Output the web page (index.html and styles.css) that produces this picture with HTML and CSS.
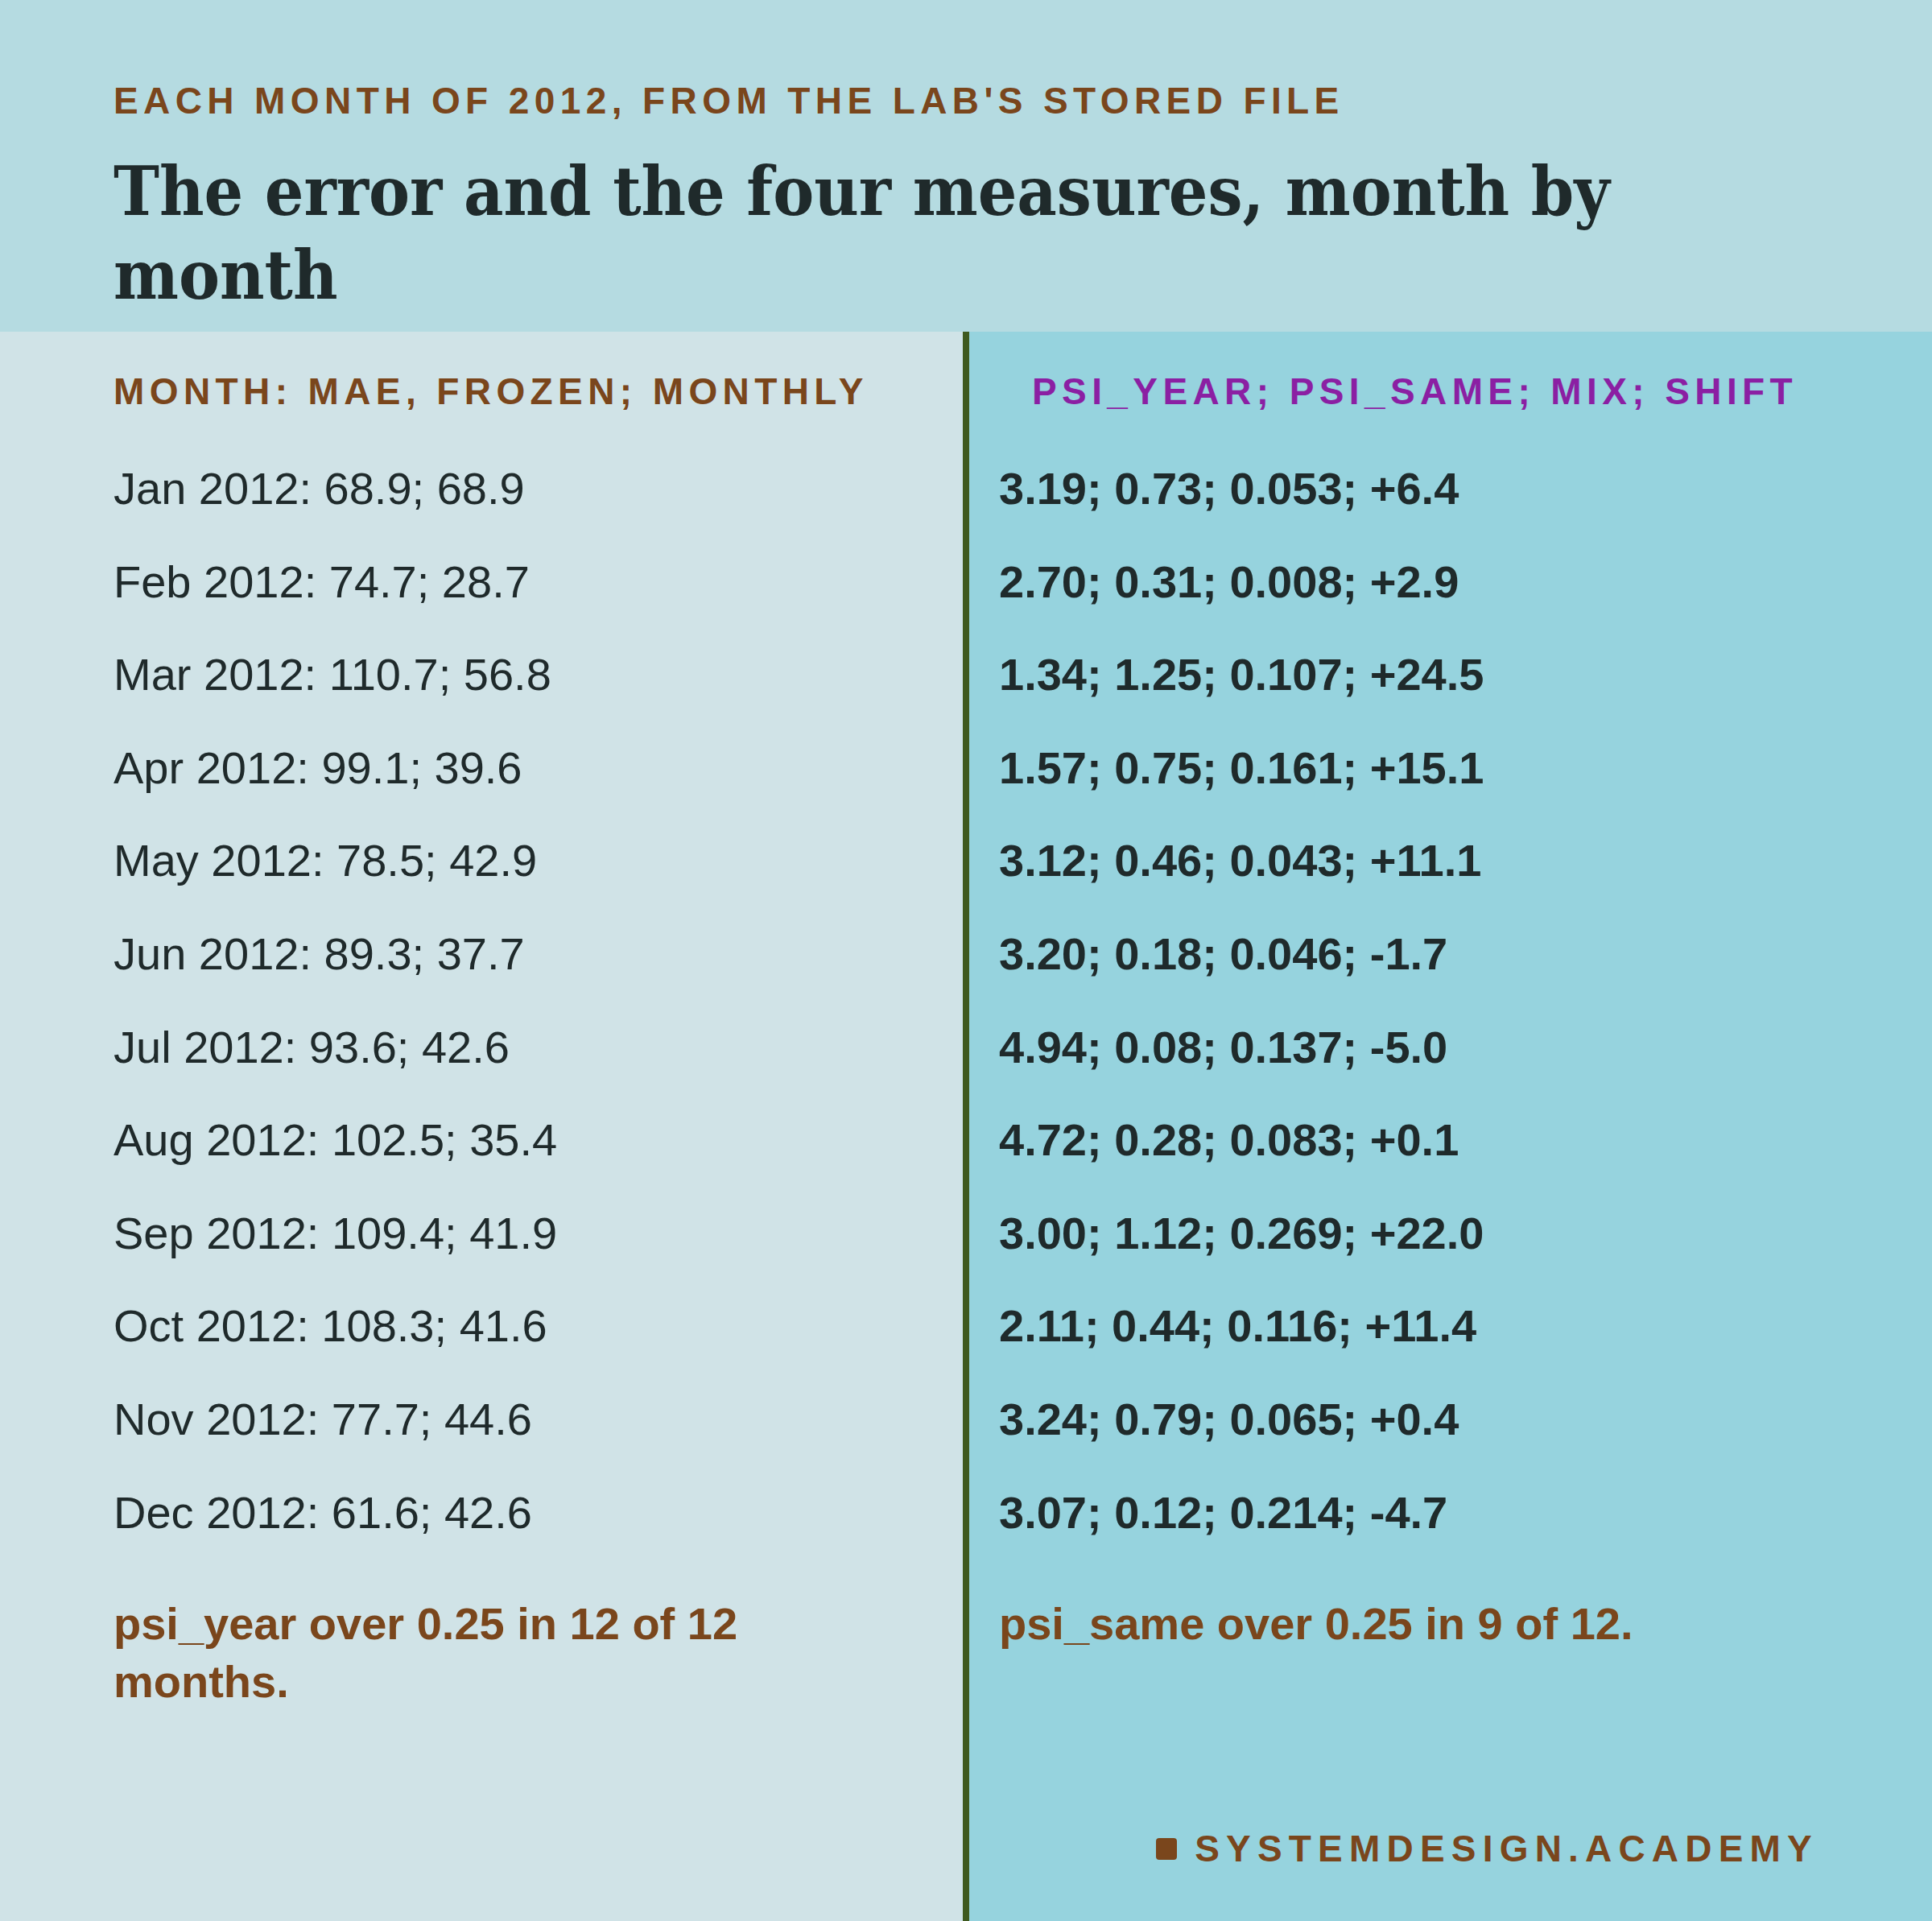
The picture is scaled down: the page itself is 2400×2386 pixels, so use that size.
FILE: index.html
```html
<!DOCTYPE html>
<html lang="en">
<head>
<meta charset="utf-8">
<title>The error and the four measures, month by month</title>
<link rel="stylesheet" href="styles.css">
</head>
<body>
<div class="page">
  <header class="masthead">
    <div class="eyebrow">EACH MONTH OF 2012, FROM THE LAB'S STORED FILE</div>
    <h1 class="title">The error and the four measures, month by month</h1>
  </header>
  <main class="columns">
    <section class="col col-left">
      <div class="col-head col-head-left">MONTH: MAE, FROZEN; MONTHLY</div>
      <ul class="rows">
        <li>Jan 2012: 68.9; 68.9</li>
        <li>Feb 2012: 74.7; 28.7</li>
        <li>Mar 2012: 110.7; 56.8</li>
        <li>Apr 2012: 99.1; 39.6</li>
        <li>May 2012: 78.5; 42.9</li>
        <li>Jun 2012: 89.3; 37.7</li>
        <li>Jul 2012: 93.6; 42.6</li>
        <li>Aug 2012: 102.5; 35.4</li>
        <li>Sep 2012: 109.4; 41.9</li>
        <li>Oct 2012: 108.3; 41.6</li>
        <li>Nov 2012: 77.7; 44.6</li>
        <li>Dec 2012: 61.6; 42.6</li>
      </ul>
      <p class="note">psi_year over 0.25 in 12 of 12 months.</p>
    </section>
    <section class="col col-right">
      <div class="col-head col-head-right">PSI_YEAR; PSI_SAME; MIX; SHIFT</div>
      <ul class="rows rows-bold">
        <li>3.19; 0.73; 0.053; +6.4</li>
        <li>2.70; 0.31; 0.008; +2.9</li>
        <li>1.34; 1.25; 0.107; +24.5</li>
        <li>1.57; 0.75; 0.161; +15.1</li>
        <li>3.12; 0.46; 0.043; +11.1</li>
        <li>3.20; 0.18; 0.046; -1.7</li>
        <li>4.94; 0.08; 0.137; -5.0</li>
        <li>4.72; 0.28; 0.083; +0.1</li>
        <li>3.00; 1.12; 0.269; +22.0</li>
        <li>2.11; 0.44; 0.116; +11.4</li>
        <li>3.24; 0.79; 0.065; +0.4</li>
        <li>3.07; 0.12; 0.214; -4.7</li>
      </ul>
      <p class="note">psi_same over 0.25 in 9 of 12.</p>
      <div class="brand"><span class="brand-mark"></span><span class="brand-text">SYSTEMDESIGN.ACADEMY</span></div>
    </section>
  </main>
</div>
</body>
</html>
```
FILE: styles.css
```css
* { box-sizing: border-box; }
html, body { margin: 0; padding: 0; }
body {
  font-family: "Liberation Sans", Arial, sans-serif;
  color: #1f2a2b;
  background: #d0e3e7;
}
.page {
  width: 2400px;
  height: 2386px;
  display: grid;
  grid-template-rows: 412px 1fr;
}
.masthead {
  background: #b5dbe1;
  padding: 98px 141px 0 141px;
}
.eyebrow {
  font-size: 46px;
  line-height: 55px;
  font-weight: 700;
  letter-spacing: 6.4px;
  color: #7a461c;
}
.title {
  margin: 32px 0 0 0;
  font-family: "DejaVu Serif Condensed", "DejaVu Serif", serif;
  font-stretch: condensed;
  font-weight: 700;
  font-size: 85px;
  line-height: 104px;
  color: #1f2a2b;
}
.columns {
  display: grid;
  grid-template-columns: 1196px 1fr;
}
.col {
  display: flex;
  flex-direction: column;
  padding-top: 47px;
}
.col-left {
  background: #d0e3e7;
  padding-left: 141px;
  padding-right: 96px;
}
.col-right {
  background: #96d3de;
  border-left: 8px solid #3f5a1f;
  padding-left: 37px;
  padding-right: 141px;
  padding-bottom: 62px;
}
.col-head {
  font-size: 46px;
  line-height: 55px;
  font-weight: 700;
  letter-spacing: 6.4px;
  white-space: nowrap;
}
.col-head-left { color: #7a461c; }
.col-head-right { color: #8b1fa3; padding-left: 41px; }
.rows {
  list-style: none;
  margin: 55px 0 0 0;
  padding: 0;
  display: flex;
  flex-direction: column;
  gap: 40px;
}
.rows li {
  font-size: 56px;
  line-height: 75.6px;
}
.rows-bold li { font-weight: 700; }
.note {
  margin: 65px 0 0 0;
  font-size: 56px;
  line-height: 71.7px;
  font-weight: 700;
  color: #7a461c;
}
.brand {
  margin-top: auto;
  display: flex;
  align-items: center;
  justify-content: flex-end;
  gap: 22px;
}
.brand-mark {
  width: 26px;
  height: 27px;
  border-radius: 4px;
  background: #7a461c;
}
.brand-text {
  font-size: 46px;
  line-height: 55px;
  font-weight: 700;
  letter-spacing: 8.2px;
  color: #7a461c;
}
```
